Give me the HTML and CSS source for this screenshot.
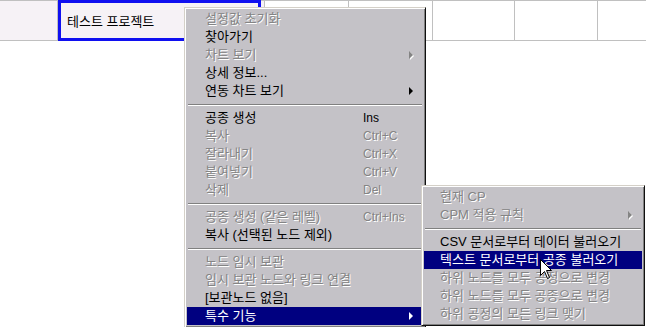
FILE: index.html
```html
<!DOCTYPE html>
<html lang="ko">
<head>
    <meta charset="UTF-8">
    <title>공종 메뉴</title>
    <link rel="stylesheet" href="styles.css">
</head>
<body>
    <div class="sheet">
        <div class="row">
            <div class="cell cell-head"></div>
            <div class="cell cell-name">
                <span class="cell-text">테스트 프로젝트</span>
                <div class="focus-ring"></div>
            </div>
            <div class="cell w84"></div>
            <div class="cell w84"></div>
            <div class="cell w82"></div>
            <div class="cell w83"></div>
            <div class="cell cell-rest"></div>
        </div>
    </div>

    <!-- 우클릭 메뉴 -->
    <div class="menu menu-main">
        <div class="item disabled"><span class="label">설정값 초기화</span></div>
        <div class="item"><span class="label">찾아가기</span></div>
        <div class="item disabled"><span class="label">차트 보기</span><span class="key"></span><span class="arrow"></span></div>
        <div class="item"><span class="label">상세 정보...</span></div>
        <div class="item"><span class="label">연동 차트 보기</span><span class="key"></span><span class="arrow"></span></div>
        <div class="sep"></div>
        <div class="item"><span class="label">공종 생성</span><span class="key">Ins</span></div>
        <div class="item disabled"><span class="label">복사</span><span class="key">Ctrl+C</span></div>
        <div class="item disabled"><span class="label">잘라내기</span><span class="key">Ctrl+X</span></div>
        <div class="item disabled"><span class="label">붙여넣기</span><span class="key">Ctrl+V</span></div>
        <div class="item disabled"><span class="label">삭제</span><span class="key">Del</span></div>
        <div class="sep"></div>
        <div class="item disabled"><span class="label">공종 생성 (같은 레벨)</span><span class="key">Ctrl+Ins</span></div>
        <div class="item"><span class="label">복사 (선택된 노드 제외)</span></div>
        <div class="sep"></div>
        <div class="item disabled"><span class="label">노드 임시 보관</span></div>
        <div class="item disabled"><span class="label">임시 보관 노드와 링크 연결</span></div>
        <div class="item"><span class="label">[보관노드 없음]</span></div>
        <div class="item active"><span class="label">특수 기능</span><span class="key"></span><span class="arrow"></span></div>
    </div>

    <div class="menu menu-sub">
        <div class="item disabled"><span class="label">현재 CP</span></div>
        <div class="item disabled"><span class="label">CPM 적용 규칙</span><span class="arrow"></span></div>
        <div class="sep"></div>
        <div class="item"><span class="label">CSV 문서로부터 데이터 불러오기</span></div>
        <div class="item active"><span class="label">텍스트 문서로부터 공종 불러오기</span></div>
        <div class="item disabled"><span class="label">하위 노드를 모두 공정으로 변경</span></div>
        <div class="item disabled"><span class="label">하위 노드를 모두 공종으로 변경</span></div>
        <div class="item disabled"><span class="label">하위 공정의 모든 링크 맺기</span></div>
    </div>

    <svg class="cursor" width="13" height="21" viewBox="0 0 13 21">
        <path d="M0.5 0.5 L0.5 16.5 L4.5 12.5 L7.5 19.5 L9.5 18.5 L6.5 11.5 L11.5 11.5 Z" fill="#fff" stroke="#000" stroke-width="1"/>
    </svg>
</body>
</html>
```

FILE: styles.css
```css
* {
    margin: 0;
    padding: 0;
    box-sizing: border-box;
}

body {
    width: 646px;
    height: 327px;
    overflow: hidden;
    background: #fff;
    font-family: "Liberation Sans", "Noto Sans CJK KR", sans-serif;
    font-size: 12px;
    color: #000;
    position: relative;
}

/* 시트 */
.row {
    display: flex;
    height: 41px;
    border-top: 1px solid #c0c0c0;
    border-bottom: 1px solid #c0c0c0;
}

.cell {
    height: 100%;
    border-right: 1px solid #c0c0c0;
}

.cell-head {
    width: 58px;
    background: #f6f2f6;
}

.cell-name {
    width: 207px;
    background: #f6f2f6;
    position: relative;
    display: flex;
    align-items: center;
    padding-left: 9px;
}

.cell-text {
    font-size: 13px;
}

.focus-ring {
    position: absolute;
    top: -1px;
    bottom: -1px;
    left: 0;
    right: 3px;
    border: 3px solid #1010f0;
}

.w84 { width: 84px; }
.w82 { width: 82px; }
.w83 { width: 83px; }

.cell-rest {
    flex: 1;
    border-right: none;
}

/* 메뉴 */
.menu {
    position: absolute;
    background: #c4c2c7;
    border: 1px solid;
    border-color: #d4d0c8 #101010 #101010 #d4d0c8;
    box-shadow: inset 1px 1px 0 #fff, inset -1px -1px 0 #808080;
    padding: 2px;
}

.menu-main {
    left: 184px;
    top: 7px;
    width: 242px;
}

.menu-sub {
    left: 421px;
    top: 185px;
    width: 224px;
    z-index: 2;
}

.item {
    display: grid;
    grid-template-columns: 158px 1fr 14px;
    align-items: center;
    height: 18px;
    line-height: 18px;
    padding-left: 18px;
    white-space: nowrap;
}

.menu-sub .item {
    grid-template-columns: 1fr 14px;
    padding-left: 16px;
}

.label {
    font-size: 13px;
}

.disabled {
    color: #848484;
    text-shadow: 1px 1px 0 #fff;
}

.active {
    background: #000080;
    color: #fff;
}

.arrow {
    justify-self: start;
    width: 0;
    height: 0;
    border-top: 4px solid transparent;
    border-bottom: 4px solid transparent;
    border-left: 4px solid #000;
}

.disabled .arrow {
    border-left-color: #848484;
    filter: drop-shadow(1px 1px 0 #fff);
}

.active .arrow {
    border-left-color: #fff;
}

.sep {
    height: 9px;
    margin: 0 1px;
    display: flex;
    flex-direction: column;
    justify-content: center;
}

.sep::before {
    content: "";
    height: 1px;
    background: #808080;
    border-bottom: 1px solid #fff;
    box-sizing: content-box;
}

.cursor {
    position: absolute;
    left: 540px;
    top: 259px;
    z-index: 3;
}
```
